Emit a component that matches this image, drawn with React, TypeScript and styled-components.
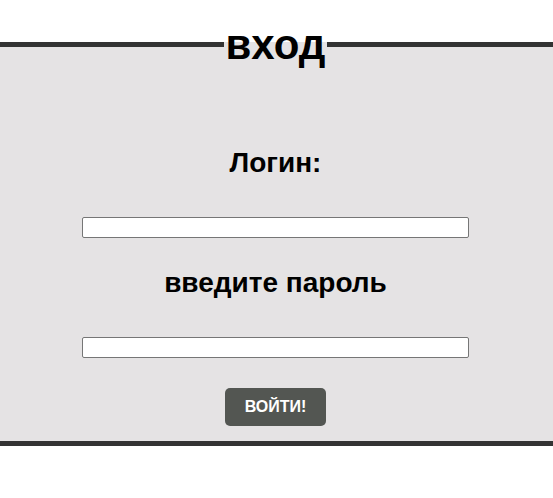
import React from "react";
import styled, { createGlobalStyle } from "styled-components";

const GlobalStyle = createGlobalStyle`
  body {
    margin: 0;
    background: #fff;
    font-family: "Liberation Sans", Arial, sans-serif;
    color: #000;
  }
`;

const Page = styled.main`
  padding: 20px 0 52px;
`;

const Panel = styled.fieldset`
  min-width: 0;
  margin: 0;
  padding: 78px 2px 15px 0;
  border: 0 solid #333;
  border-width: 5px 0;
  background: #e5e3e4;
`;

const Title = styled.legend`
  margin: 0 auto;
  padding: 0 2px;
  font-size: 42px;
  line-height: 49px;
  font-weight: 700;
`;

const Form = styled.form`
  display: flex;
  flex-direction: column;
  align-items: center;
  gap: 29px;
`;

const Row = styled.div`
  display: flex;
  flex-direction: column;
  align-items: center;
  gap: 38px;
  width: 100%;
`;

const Label = styled.label`
  font-size: 28px;
  line-height: 32px;
  font-weight: 700;
`;

const Field = styled.input`
  box-sizing: border-box;
  width: calc(70% + 1px);
  height: 21px;
  padding: 1px 2px;
  border: 1px solid #767676;
  border-radius: 2px;
  background: #fff;
`;

const Submit = styled.button`
  height: 38px;
  margin-top: 1px;
  padding: 0 20px;
  border: 0;
  border-radius: 5px;
  background: #535652;
  color: #fff;
  font-family: inherit;
  font-size: 16px;
  font-weight: 700;
`;

export default function App() {
  return (
    <Page>
      <GlobalStyle />
      <Panel>
        <Title>вход</Title>
        <Form onSubmit={(event) => event.preventDefault()}>
          <Row>
            <Label htmlFor="login">Логин:</Label>
            <Field id="login" type="text" autoComplete="username" />
          </Row>
          <Row>
            <Label htmlFor="password">введите пароль</Label>
            <Field id="password" type="password" autoComplete="current-password" />
          </Row>
          <Submit type="submit">ВОЙТИ!</Submit>
        </Form>
      </Panel>
    </Page>
  );
}
